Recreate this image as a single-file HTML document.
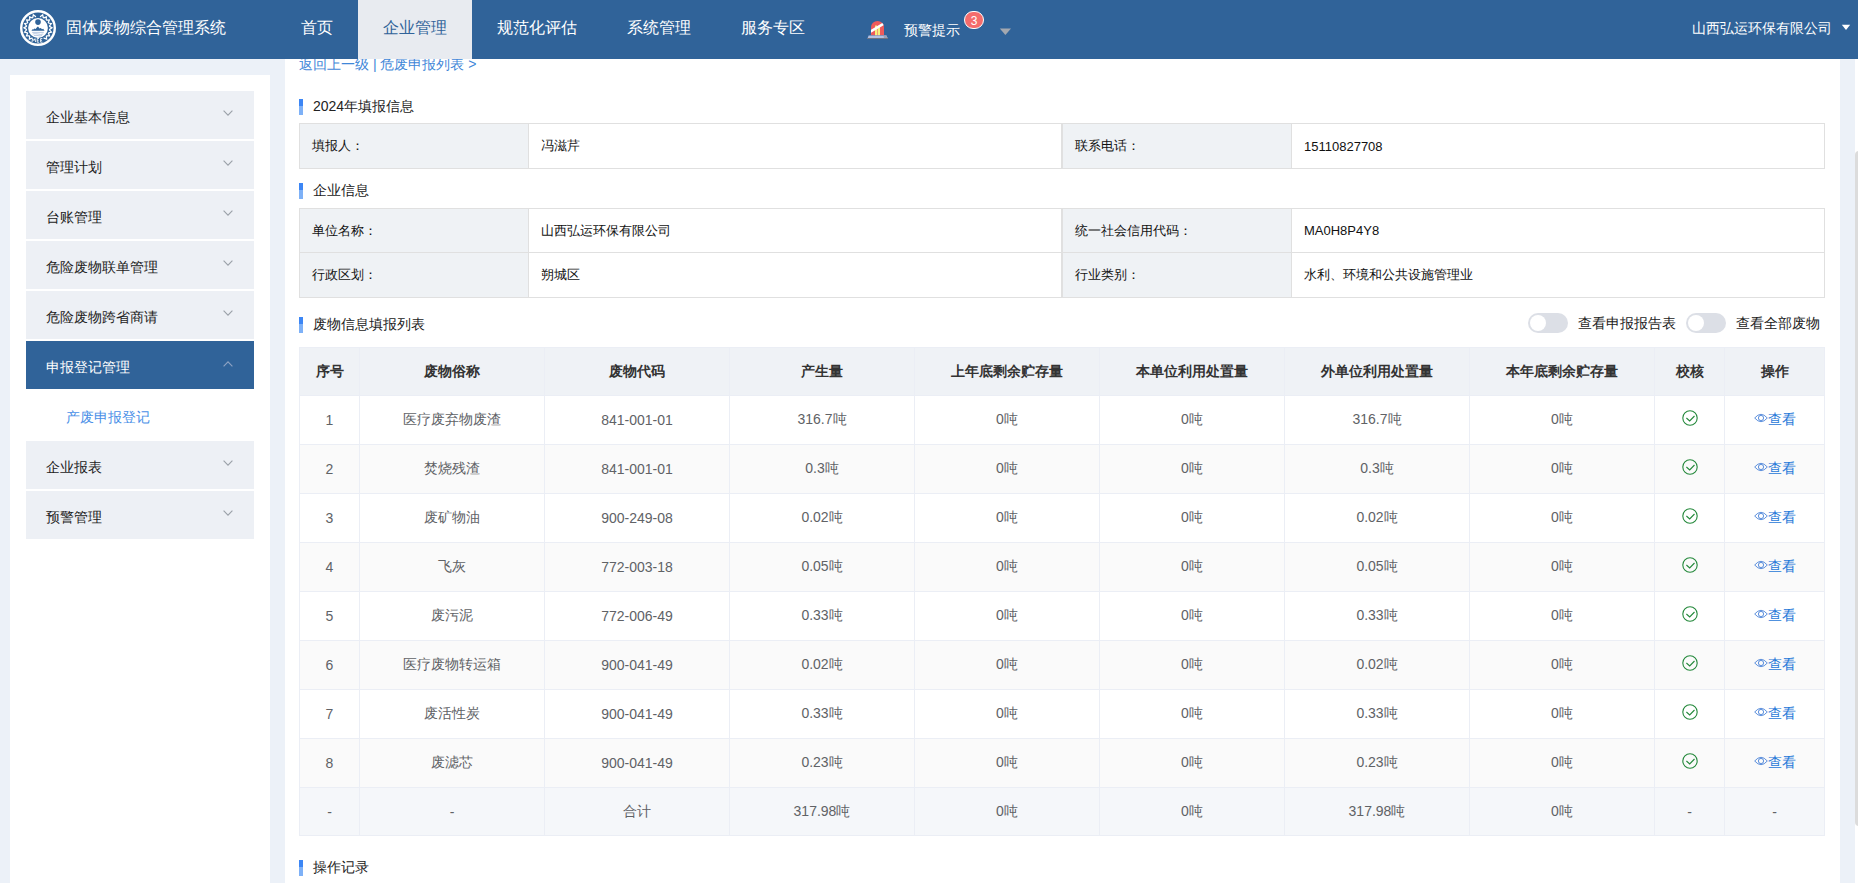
<!DOCTYPE html>
<html><head><meta charset="utf-8">
<style>
*{box-sizing:border-box;margin:0;padding:0}
html,body{width:1858px;height:883px;overflow:hidden}
body{background:#ecf1f8;font-family:"Liberation Sans",sans-serif;font-size:14px;color:#333;position:relative}
.abs{position:absolute}
#hdr{position:absolute;left:0;top:0;width:1858px;height:59px;background:#306399;z-index:5}
#hdr *{z-index:6}
#logo{position:absolute;z-index:6;left:20px;top:10px;width:36px;height:36px}
#title{position:absolute;z-index:6;left:66px;top:0;height:56px;line-height:56px;font-size:16px;color:#fff;white-space:nowrap}
.nav{position:absolute;z-index:6;top:0;height:59px;line-height:56px;font-size:16px;color:#fff;text-align:center;white-space:nowrap}
.nav.act{background:#e8ebf0;color:#306399}
#alarm-t{position:absolute;z-index:6;left:904px;top:0;height:59px;line-height:60px;font-size:14px;color:#fff}
#badge{position:absolute;z-index:6;left:964px;top:11px;width:20px;height:18px;border-radius:10px;background:#f56c6c;border:1px solid #fff;color:#fff;font-size:12px;line-height:18px;text-align:center}
#company{position:absolute;z-index:6;left:1692px;top:0;height:56px;line-height:56px;font-size:14px;color:#fff;white-space:nowrap}

#side{position:absolute;left:10px;top:75px;width:260px;height:808px;background:#fff}
.mi{position:absolute;left:26px;width:228px;height:48px;background:#edf0f5;line-height:52px;padding-left:20px;color:#222;font-size:14px}
.mi.act{background:#306399;color:#fff}
.chev{position:absolute;left:197px;top:19px;width:10px;height:6px}
#sub{position:absolute;left:66px;top:389px;height:52px;line-height:56px;color:#4a8fe7;font-size:14px}

#main{position:absolute;left:285px;top:58px;width:1555px;height:825px;background:#fff}
#strack{position:absolute;left:1855px;top:59px;width:3px;height:824px;background:#fff}
#sbar{position:absolute;left:1855px;top:151px;width:8px;height:675px;background:#dcdcdc;border-radius:4px}
#crumb{position:absolute;left:299px;top:52px;height:24px;line-height:24px;color:#3f87d8;font-size:14px;white-space:nowrap}
.sec{position:absolute;left:299px;height:16px}
.sec i{position:absolute;left:0;top:0;width:4px;height:16px;background:linear-gradient(#3c86f5 0,#3c86f5 45%,#7eb1f7 45%,#7eb1f7 100%)}
.sec span{position:absolute;left:14px;top:-5px;line-height:24px;white-space:nowrap;color:#222;font-size:14px}

.itab{position:absolute;left:299px;width:1525px;border-collapse:collapse;table-layout:fixed}
.itab td{border:1px solid #e0e0e0;height:45px;padding:0 12px;font-size:13px;color:#111;white-space:nowrap}
.itab td.l{background:#eff2f5}
.itab tr.r44 td{height:44px}

#wt{position:absolute;left:299px;top:347px;width:1525px;border-collapse:collapse;table-layout:fixed}
#wt th,#wt td{border:1px solid #ebeef5;text-align:center;font-size:14px;white-space:nowrap;padding:0}
#wt th{height:48px;padding-top:1px;background:#eff2f6;color:#333;font-weight:bold}
#wt td{height:49px;padding-top:0;padding-bottom:0;color:#606266}
#wt tr.e td{background:#fafafa}
#wt tr.tot td{background:#f5f7fa;height:48px}
.tg{position:absolute;top:313px;width:40px;height:20px;border-radius:10px;background:#dcdfe6}.tg b{position:absolute;left:2px;top:2px;width:16px;height:16px;border-radius:50%;background:#fff}.tgt{position:absolute;top:311px;line-height:24px;font-size:14px;color:#222;white-space:nowrap}
.ck{display:block;margin:0 auto;position:relative;top:-2px}
.vw{color:#1f78d8;position:relative;left:0}
.vw svg{display:inline-block;vertical-align:middle;position:relative;top:-2px}
</style></head><body>
<div id="hdr"></div>
<svg id="logo" viewBox="0 0 36 36"><circle cx="18" cy="18" r="16.8" fill="none" stroke="#fff" stroke-width="2.4"/><path d="M9.68 26.22 L9.38 29.03 L12.04 28.06 M7.59 23.33 L6.46 25.93 L9.29 25.81 M6.47 19.96 L4.61 22.09 L7.35 22.83 M6.41 16.40 L4.00 17.88 L6.39 19.40 M7.43 12.99 L4.69 13.67 L6.50 15.84 M9.43 10.04 L6.60 9.87 L7.69 12.49 M12.22 7.83 L9.57 6.82 L9.82 9.64 M15.54 6.56 L13.33 4.80 L12.71 7.57 M23.96 28.06 L26.62 29.03 L26.32 26.22 M26.71 25.81 L29.54 25.93 L28.41 23.33 M28.65 22.83 L31.39 22.09 L29.53 19.96 M29.61 19.40 L32.00 17.88 L29.59 16.40 M29.50 15.84 L31.31 13.67 L28.57 12.99 M28.31 12.49 L29.40 9.87 L26.57 10.04 M26.18 9.64 L26.43 6.82 L23.78 7.83 M23.29 7.57 L22.67 4.80 L20.46 6.56" fill="none" stroke="#fff" stroke-width="1.25" stroke-linecap="round"/><circle cx="18" cy="18" r="9.9" fill="#fff"/><circle cx="18" cy="12.1" r="2.8" fill="#306399"/><path d="M11.4 20.8 L12.6 19.2 L13.4 19.6 L14.4 18.4 L15.6 19 L17.2 17 L18 16.6 L19.6 18.4 L20.8 18 L22 19.2 L23.2 18.8 L24.6 20.8 Z" fill="#306399"/><path d="M12.2 22.4 H23.8 M12.8 24 Q15.4 23.2 18 24 Q20.6 24.8 23.2 24 M14 25.6 Q16 25 18 25.6 Q20 26.2 22 25.6" fill="none" stroke="#a9bddb" stroke-width="0.8"/><path d="M12 32 L12.6 28.6 L13.8 30.6 L15 28.6 L15.6 32 M17.2 28.5 V32.2 M17.2 28.5 H19 M17.2 30.3 H18.6 M17.2 32.2 H19.1 M20.6 28.5 V32.2 M20.6 28.5 H22.4 M20.6 30.3 H22 M20.6 32.2 H22.5" fill="none" stroke="#fff" stroke-width="0.85"/></svg>
<div id="title">固体废物综合管理系统</div>
<div class="nav" style="left:276px;width:82px">首页</div>
<div class="nav act" style="left:358px;width:114px">企业管理</div>
<div class="nav" style="left:472px;width:130px">规范化评估</div>
<div class="nav" style="left:602px;width:114px">系统管理</div>
<div class="nav" style="left:716px;width:114px">服务专区</div>
<svg id="alarm" style="position:absolute;left:862px;top:16px;z-index:6" width="32" height="26" viewBox="0 0 32 26"><path d="M9 19.3 V11.4 A6.5 6.5 0 0 1 22 11.4 V19.3 Z" fill="#ef5b5b"/><rect x="13" y="9.5" width="2" height="9.8" fill="#f6f07c"/><rect x="16" y="10" width="2" height="9.3" fill="#f6f07c"/><rect x="15" y="10" width="1" height="9.3" fill="#f3a070"/><clipPath id="dome"><path d="M9 19.3 V11.4 A6.5 6.5 0 0 1 22 11.4 V19.3 Z"/></clipPath><path clip-path="url(#dome)" d="M8 15.8 L23 6.8" stroke="#fff" stroke-width="2.6"/><path d="M6.6 19.6 H24.4 L25.9 22.8 H5.4 Z" fill="#b4c0e2"/><path d="M21.5 19.6 H24.4 L25.9 22.8 H22 Z" fill="#9aa3b8"/><rect x="5.3" y="22" width="20.7" height="0.9" fill="#6f6f78"/></svg><svg style="position:absolute;left:999px;top:28px;z-index:6" width="13" height="8" viewBox="0 0 13 8"><path d="M0.8 0.4 H12 L6.4 7 Z" fill="#a3a8b0"/></svg><svg style="position:absolute;left:1841px;top:24px;z-index:6" width="10" height="7" viewBox="0 0 10 7"><path d="M0.8 0.8 H9.2 L5 6 Z" fill="#fff"/></svg><div id="alarm-t">预警提示</div>
<div id="badge">3</div>
<div id="company">山西弘运环保有限公司</div>

<div id="side"></div>
<div class="mi" style="top:91px">企业基本信息<svg class="chev" viewBox="0 0 10 6"><path d="M0.6 0.6 L5 5.2 L9.4 0.6" fill="none" stroke="#9aa0a8" stroke-width="1.1"/></svg></div>
<div class="mi" style="top:141px">管理计划<svg class="chev" viewBox="0 0 10 6"><path d="M0.6 0.6 L5 5.2 L9.4 0.6" fill="none" stroke="#9aa0a8" stroke-width="1.1"/></svg></div>
<div class="mi" style="top:191px">台账管理<svg class="chev" viewBox="0 0 10 6"><path d="M0.6 0.6 L5 5.2 L9.4 0.6" fill="none" stroke="#9aa0a8" stroke-width="1.1"/></svg></div>
<div class="mi" style="top:241px">危险废物联单管理<svg class="chev" viewBox="0 0 10 6"><path d="M0.6 0.6 L5 5.2 L9.4 0.6" fill="none" stroke="#9aa0a8" stroke-width="1.1"/></svg></div>
<div class="mi" style="top:291px">危险废物跨省商请<svg class="chev" viewBox="0 0 10 6"><path d="M0.6 0.6 L5 5.2 L9.4 0.6" fill="none" stroke="#9aa0a8" stroke-width="1.1"/></svg></div>
<div class="mi act" style="top:341px">申报登记管理<svg class="chev" style="top:20px" viewBox="0 0 10 6"><path d="M0.6 5.4 L5 0.8 L9.4 5.4" fill="none" stroke="#8ea3c3" stroke-width="1.1"/></svg></div>
<div id="sub">产废申报登记</div>
<div class="mi" style="top:441px">企业报表<svg class="chev" viewBox="0 0 10 6"><path d="M0.6 0.6 L5 5.2 L9.4 0.6" fill="none" stroke="#9aa0a8" stroke-width="1.1"/></svg></div>
<div class="mi" style="top:491px">预警管理<svg class="chev" viewBox="0 0 10 6"><path d="M0.6 0.6 L5 5.2 L9.4 0.6" fill="none" stroke="#9aa0a8" stroke-width="1.1"/></svg></div>

<div id="main"></div>
<div id="strack"></div><div id="sbar"></div>
<div id="crumb">返回上一级 | 危废申报列表 &gt;</div>

<div class="sec" style="top:99px"><i></i><span>2024年填报信息</span></div>
<table class="itab" style="top:123px"><colgroup><col style="width:229px"><col style="width:534px"><col style="width:229px"><col style="width:533px"></colgroup>
<tr><td class="l">填报人：</td><td>冯滋芹</td><td class="l">联系电话：</td><td>15110827708</td></tr></table>

<div class="sec" style="top:183px"><i></i><span>企业信息</span></div>
<table class="itab" style="top:208px"><colgroup><col style="width:229px"><col style="width:534px"><col style="width:229px"><col style="width:533px"></colgroup>
<tr class="r44"><td class="l">单位名称：</td><td>山西弘运环保有限公司</td><td class="l">统一社会信用代码：</td><td>MA0H8P4Y8</td></tr>
<tr><td class="l">行政区划：</td><td>朔城区</td><td class="l">行业类别：</td><td>水利、环境和公共设施管理业</td></tr></table>

<div class="sec" style="top:317px"><i></i><span>废物信息填报列表</span></div>
<div class="tg" style="left:1528px"><b></b></div><div class="tgt" style="left:1578px">查看申报报告表</div><div class="tg" style="left:1686px"><b></b></div><div class="tgt" style="left:1736px">查看全部废物</div><div style="position:absolute;left:1061px;top:123px;width:1px;height:46px;background:#e0e0e0"></div><div style="position:absolute;left:1061px;top:208px;width:1px;height:90px;background:#e0e0e0"></div>

<table id="wt"><colgroup><col style="width:60px"><col style="width:185px"><col style="width:185px"><col style="width:185px"><col style="width:185px"><col style="width:185px"><col style="width:185px"><col style="width:185px"><col style="width:70px"><col style="width:100px"></colgroup>
<tr><th>序号</th><th>废物俗称</th><th>废物代码</th><th>产生量</th><th>上年底剩余贮存量</th><th>本单位利用处置量</th><th>外单位利用处置量</th><th>本年底剩余贮存量</th><th>校核</th><th>操作</th></tr>
<tr><td>1</td><td>医疗废弃物废渣</td><td>841-001-01</td><td>316.7吨</td><td>0吨</td><td>0吨</td><td>316.7吨</td><td>0吨</td><td><svg class="ck" width="16" height="16" viewBox="0 0 16 16"><circle cx="8" cy="8" r="7.2" fill="none" stroke="#23883a" stroke-width="1.1"/><path d="M4.4 8 L7.7 11 L12.5 6" fill="none" stroke="#23883a" stroke-width="1.1"/></svg></td><td><span class="vw"><svg width="14" height="10" viewBox="0 0 14 10"><path d="M0.7 5 Q7 -2.4 13.3 5 Q7 12.4 0.7 5 Z" fill="none" stroke="#4a82d8" stroke-width="0.9"/><circle cx="7" cy="5" r="2.6" fill="none" stroke="#4a82d8" stroke-width="0.9"/></svg>查看</span></td></tr>
<tr class="e"><td>2</td><td>焚烧残渣</td><td>841-001-01</td><td>0.3吨</td><td>0吨</td><td>0吨</td><td>0.3吨</td><td>0吨</td><td><svg class="ck" width="16" height="16" viewBox="0 0 16 16"><circle cx="8" cy="8" r="7.2" fill="none" stroke="#23883a" stroke-width="1.1"/><path d="M4.4 8 L7.7 11 L12.5 6" fill="none" stroke="#23883a" stroke-width="1.1"/></svg></td><td><span class="vw"><svg width="14" height="10" viewBox="0 0 14 10"><path d="M0.7 5 Q7 -2.4 13.3 5 Q7 12.4 0.7 5 Z" fill="none" stroke="#4a82d8" stroke-width="0.9"/><circle cx="7" cy="5" r="2.6" fill="none" stroke="#4a82d8" stroke-width="0.9"/></svg>查看</span></td></tr>
<tr><td>3</td><td>废矿物油</td><td>900-249-08</td><td>0.02吨</td><td>0吨</td><td>0吨</td><td>0.02吨</td><td>0吨</td><td><svg class="ck" width="16" height="16" viewBox="0 0 16 16"><circle cx="8" cy="8" r="7.2" fill="none" stroke="#23883a" stroke-width="1.1"/><path d="M4.4 8 L7.7 11 L12.5 6" fill="none" stroke="#23883a" stroke-width="1.1"/></svg></td><td><span class="vw"><svg width="14" height="10" viewBox="0 0 14 10"><path d="M0.7 5 Q7 -2.4 13.3 5 Q7 12.4 0.7 5 Z" fill="none" stroke="#4a82d8" stroke-width="0.9"/><circle cx="7" cy="5" r="2.6" fill="none" stroke="#4a82d8" stroke-width="0.9"/></svg>查看</span></td></tr>
<tr class="e"><td>4</td><td>飞灰</td><td>772-003-18</td><td>0.05吨</td><td>0吨</td><td>0吨</td><td>0.05吨</td><td>0吨</td><td><svg class="ck" width="16" height="16" viewBox="0 0 16 16"><circle cx="8" cy="8" r="7.2" fill="none" stroke="#23883a" stroke-width="1.1"/><path d="M4.4 8 L7.7 11 L12.5 6" fill="none" stroke="#23883a" stroke-width="1.1"/></svg></td><td><span class="vw"><svg width="14" height="10" viewBox="0 0 14 10"><path d="M0.7 5 Q7 -2.4 13.3 5 Q7 12.4 0.7 5 Z" fill="none" stroke="#4a82d8" stroke-width="0.9"/><circle cx="7" cy="5" r="2.6" fill="none" stroke="#4a82d8" stroke-width="0.9"/></svg>查看</span></td></tr>
<tr><td>5</td><td>废污泥</td><td>772-006-49</td><td>0.33吨</td><td>0吨</td><td>0吨</td><td>0.33吨</td><td>0吨</td><td><svg class="ck" width="16" height="16" viewBox="0 0 16 16"><circle cx="8" cy="8" r="7.2" fill="none" stroke="#23883a" stroke-width="1.1"/><path d="M4.4 8 L7.7 11 L12.5 6" fill="none" stroke="#23883a" stroke-width="1.1"/></svg></td><td><span class="vw"><svg width="14" height="10" viewBox="0 0 14 10"><path d="M0.7 5 Q7 -2.4 13.3 5 Q7 12.4 0.7 5 Z" fill="none" stroke="#4a82d8" stroke-width="0.9"/><circle cx="7" cy="5" r="2.6" fill="none" stroke="#4a82d8" stroke-width="0.9"/></svg>查看</span></td></tr>
<tr class="e"><td>6</td><td>医疗废物转运箱</td><td>900-041-49</td><td>0.02吨</td><td>0吨</td><td>0吨</td><td>0.02吨</td><td>0吨</td><td><svg class="ck" width="16" height="16" viewBox="0 0 16 16"><circle cx="8" cy="8" r="7.2" fill="none" stroke="#23883a" stroke-width="1.1"/><path d="M4.4 8 L7.7 11 L12.5 6" fill="none" stroke="#23883a" stroke-width="1.1"/></svg></td><td><span class="vw"><svg width="14" height="10" viewBox="0 0 14 10"><path d="M0.7 5 Q7 -2.4 13.3 5 Q7 12.4 0.7 5 Z" fill="none" stroke="#4a82d8" stroke-width="0.9"/><circle cx="7" cy="5" r="2.6" fill="none" stroke="#4a82d8" stroke-width="0.9"/></svg>查看</span></td></tr>
<tr><td>7</td><td>废活性炭</td><td>900-041-49</td><td>0.33吨</td><td>0吨</td><td>0吨</td><td>0.33吨</td><td>0吨</td><td><svg class="ck" width="16" height="16" viewBox="0 0 16 16"><circle cx="8" cy="8" r="7.2" fill="none" stroke="#23883a" stroke-width="1.1"/><path d="M4.4 8 L7.7 11 L12.5 6" fill="none" stroke="#23883a" stroke-width="1.1"/></svg></td><td><span class="vw"><svg width="14" height="10" viewBox="0 0 14 10"><path d="M0.7 5 Q7 -2.4 13.3 5 Q7 12.4 0.7 5 Z" fill="none" stroke="#4a82d8" stroke-width="0.9"/><circle cx="7" cy="5" r="2.6" fill="none" stroke="#4a82d8" stroke-width="0.9"/></svg>查看</span></td></tr>
<tr class="e"><td>8</td><td>废滤芯</td><td>900-041-49</td><td>0.23吨</td><td>0吨</td><td>0吨</td><td>0.23吨</td><td>0吨</td><td><svg class="ck" width="16" height="16" viewBox="0 0 16 16"><circle cx="8" cy="8" r="7.2" fill="none" stroke="#23883a" stroke-width="1.1"/><path d="M4.4 8 L7.7 11 L12.5 6" fill="none" stroke="#23883a" stroke-width="1.1"/></svg></td><td><span class="vw"><svg width="14" height="10" viewBox="0 0 14 10"><path d="M0.7 5 Q7 -2.4 13.3 5 Q7 12.4 0.7 5 Z" fill="none" stroke="#4a82d8" stroke-width="0.9"/><circle cx="7" cy="5" r="2.6" fill="none" stroke="#4a82d8" stroke-width="0.9"/></svg>查看</span></td></tr>
<tr class="tot"><td>-</td><td>-</td><td>合计</td><td>317.98吨</td><td>0吨</td><td>0吨</td><td>317.98吨</td><td>0吨</td><td>-</td><td>-</td></tr>
</table>

<div class="sec" style="top:860px"><i></i><span>操作记录</span></div>
</body></html>
